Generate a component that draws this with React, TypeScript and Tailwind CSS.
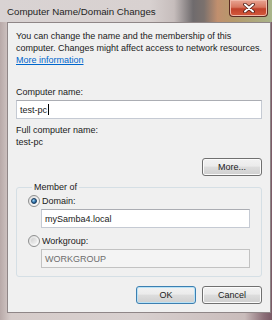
import React from "react";

function Radio({ checked }: { checked?: boolean }) {
  return (
    <span className="flex h-[12px] w-[12px] items-center justify-center rounded-full border border-[#8e8f8f] bg-[linear-gradient(135deg,#dcdcdc,#ffffff)]">
      {checked ? (
        <span className="h-[6px] w-[6px] rounded-full border border-[#193a5c] bg-[radial-gradient(circle_at_35%_35%,#9fd4f4,#2b6ea8_60%,#1c4a78)]" />
      ) : (
        <span className="h-[6px] w-[6px] rounded-full bg-[linear-gradient(135deg,#d0d0d0,#f4f4f4)]" />
      )}
    </span>
  );
}

function Button({ label, focused }: { label: string; focused?: boolean }) {
  return (
    <div
      className={
        "flex h-[18px] w-[60px] items-center justify-center rounded-[3px] border bg-[linear-gradient(180deg,#f2f2f2_0%,#ebebeb_45%,#dddddd_50%,#cfcfcf_100%)] text-[9px] text-[#1a1a1a] " +
        (focused ? "border-[#3c7fb1] shadow-[inset_0_0_0_1px_#b9e2f6]" : "border-[#707070] shadow-[inset_0_0_0_1px_#fbfbfb]")
      }
    >
      {label}
    </div>
  );
}

export default function App() {
  return (
    <div className="flex h-[320px] w-[272px] flex-col overflow-hidden bg-[linear-gradient(90deg,#b8a9a8_0%,#d6ccca_4%,#d8d0cf_50%,#c9bcbb_90%,#8c6f78_97%,#7a5a66_100%)] font-['Liberation_Sans',Arial,sans-serif]">
      {/* Title bar */}
      <div className="flex h-[22px] items-start justify-between bg-[linear-gradient(90deg,#d9d3d3_0%,#d8d1d0_55%,#c6bdbc_64%,#6f6b6d_71%,#7b716d_75%,#c18f6e_80%,#b59a6c_86%,#a8b48a_100%)]">
        <div className="pl-[7px] pt-[5px] text-[9.7px] leading-[13px] text-[#1e1e1e]">
          Computer Name/Domain Changes
        </div>
        <div className="mr-[4px] flex h-[17px] w-[39px] items-center justify-center rounded-b-[4px] border border-t-0 border-[#5a2a22] bg-[linear-gradient(180deg,#e9a593_0%,#d7765f_45%,#c0412a_55%,#d55a3c_100%)] shadow-[inset_0_0_0_1px_#f0b8a8]">
          <svg width="12" height="10" viewBox="0 0 12 10">
            <path d="M2 1.5 L10 8.5 M10 1.5 L2 8.5" stroke="#4a1a12" strokeWidth="3.6" strokeLinecap="round" />
            <path d="M2 1.5 L10 8.5 M10 1.5 L2 8.5" stroke="#ffffff" strokeWidth="2" strokeLinecap="round" />
          </svg>
        </div>
      </div>

      {/* Body */}
      <div className="flex flex-1 pb-[7px] pl-[7px] pr-[5px]">
        <div className="flex flex-1 flex-col border border-[#8f8687] bg-[#f0f0f0] px-[8px] pt-[7px] text-[9px] leading-[12px] text-[#1a1a1a]">
          <p className="whitespace-nowrap">
            You can change the name and the membership of this
            <br />
            computer. Changes might affect access to network resources.
            <br />
            <span className="text-[#0066cc] underline">More information</span>
          </p>

          <div className="mt-[20px]">Computer name:</div>
          <div className="mt-[2px] flex h-[19px] items-center border border-[#c5cad3] border-t-[#abadb3] bg-white px-[3px]">
            test-pc<span className="ml-[1px] h-[11px] w-px bg-black" />
          </div>

          <div className="mt-[5px]">Full computer name:</div>
          <div>test-pc</div>

          <div className="mt-[10px] flex justify-end">
            <Button label="More..." />
          </div>

          <fieldset className="mt-[5px] rounded-[3px] border border-[#d5dfe5] pb-[8px] pl-[11px] pr-[11px] pt-[2px]">
            <legend className="ml-[4px] px-[2px]">Member of</legend>
            <div className="flex items-center gap-[2px]">
              <Radio checked />
              <span>Domain:</span>
            </div>
            <div className="ml-[13px] mt-[2px] flex h-[19px] items-center border border-[#c5cad3] border-t-[#abadb3] bg-white px-[3px]">
              mySamba4.local
            </div>
            <div className="mt-[7px] flex items-center gap-[2px]">
              <Radio />
              <span>Workgroup:</span>
            </div>
            <div className="ml-[13px] mt-[2px] flex h-[19px] items-center border border-[#c2c2c2] bg-[#f4f4f4] px-[3px] text-[#6d6d6d]">
              WORKGROUP
            </div>
          </fieldset>

          <div className="mt-[9px] flex justify-end gap-[6px]">
            <Button label="OK" focused />
            <Button label="Cancel" />
          </div>
        </div>
      </div>
    </div>
  );
}
